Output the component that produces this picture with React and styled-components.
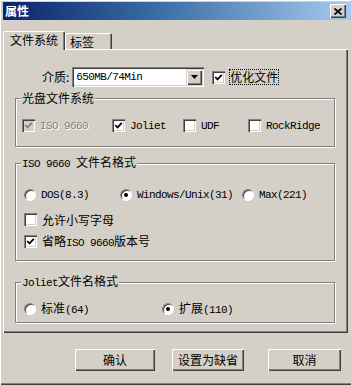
import React from "react";
import styled, { createGlobalStyle } from "styled-components";

const GlobalStyle = createGlobalStyle`
  html, body {
    margin: 0;
    padding: 0;
    background: #d4d0c8;
  }
  body {
    font-family: "Noto Sans CJK SC", "Liberation Sans", sans-serif;
    font-size: 12px;
    color: #000;
  }
`;

const Window = styled.div`
  width: 351px;
  height: 385px;
  box-sizing: border-box;
  overflow: hidden;
  padding: 2px 0 0 3px;
  background: #d4d0c8;
  box-shadow: inset 1px 1px 0 #ffffff, inset 0 -1px 0 #404040,
    inset 0 -2px 0 #808080;
`;

const TitleBar = styled.div`
  height: 18px;
  display: flex;
  align-items: center;
  justify-content: space-between;
  padding: 0 5px 0 2px;
  background: linear-gradient(90deg, #0a246a 0%, #3a6ea5 45%, #a6caf0 100%);
`;

const Title = styled.span`
  color: #fff;
  font-weight: 700;
  font-size: 12px;
  line-height: 12px;
`;

const CloseButton = styled.div`
  width: 16px;
  height: 14px;
  box-sizing: border-box;
  display: flex;
  align-items: center;
  justify-content: center;
  background: #d4d0c8;
  box-shadow: inset 1px 1px 0 #ffffff, inset -1px -1px 0 #404040,
    inset -2px -2px 0 #808080;
`;

const TabStrip = styled.div`
  margin-top: 11px;
  height: 18px;
  display: flex;
  align-items: flex-end;
`;

const Tab = styled.div`
  position: relative;
  z-index: ${(p) => (p.$active ? 1 : 0)};
  width: ${(p) => p.$w}px;
  height: ${(p) => (p.$active ? 19 : 16)}px;
  margin-bottom: ${(p) => (p.$active ? -1 : 0)}px;
  box-sizing: border-box;
  padding: ${(p) => (p.$active ? "2px 0 0 7px" : "2px 0 0 5px")};
  line-height: 14px;
  background: #d4d0c8;
  border-radius: 2px 2px 0 0;
  box-shadow: inset 1px 1px 0 #ffffff, inset -1px 0 0 #404040,
    inset -2px 0 0 #808080;
`;

const Panel = styled.div`
  width: 345px;
  height: 284px;
  box-sizing: border-box;
  padding: 18px 13px 0 12px;
  box-shadow: inset 1px 1px 0 #ffffff, inset -1px -1px 0 #404040,
    inset -2px -2px 0 #808080;
`;

const MediaRow = styled.div`
  height: 20px;
  display: flex;
  align-items: center;
  padding-left: 27px;
`;

const FieldLabel = styled.span`
  margin-right: 3px;
  line-height: 12px;
`;

const Combo = styled.div`
  width: 132px;
  height: 20px;
  box-sizing: border-box;
  display: flex;
  align-items: center;
  justify-content: space-between;
  padding: 2px 2px 2px 4px;
  background: #fff;
  box-shadow: inset 1px 1px 0 #808080, inset 2px 2px 0 #404040,
    inset -1px -1px 0 #ffffff, inset -2px -2px 0 #d4d0c8;
`;

const DropButton = styled.div`
  width: 16px;
  height: 16px;
  box-sizing: border-box;
  display: flex;
  align-items: center;
  justify-content: center;
  background: #d4d0c8;
  box-shadow: inset 1px 1px 0 #d4d0c8, inset 2px 2px 0 #ffffff,
    inset -1px -1px 0 #404040, inset -2px -2px 0 #808080;
`;

const Latin = styled.span`
  font-family: "Liberation Mono", "DejaVu Sans Mono", monospace;
  font-size: 11px;
  letter-spacing: -0.6px;
  color: ${(p) => (p.$muted ? "#808080" : "inherit")};
  text-shadow: ${(p) => (p.$muted ? "1px 1px 0 #ffffff" : "none")};
`;

const Box = styled.span`
  width: 13px;
  height: 13px;
  box-sizing: border-box;
  flex: none;
  display: flex;
  align-items: center;
  justify-content: center;
  background: ${(p) => (p.$disabled ? "#d4d0c8" : "#ffffff")};
  box-shadow: inset 1px 1px 0 #808080, inset 2px 2px 0 #404040,
    inset -1px -1px 0 #ffffff, inset -2px -2px 0 #d4d0c8;
`;

const RadioDot = styled.span`
  width: 12px;
  height: 12px;
  box-sizing: border-box;
  flex: none;
  border-radius: 50%;
  display: flex;
  align-items: center;
  justify-content: center;
  background: #fff;
  border: 1px solid;
  border-color: #808080 #ffffff #ffffff #808080;
  box-shadow: inset 1px 1px 0 #404040;
  &::after {
    content: "";
    width: 4px;
    height: 4px;
    border-radius: 50%;
    background: #000;
    display: ${(p) => (p.$on ? "block" : "none")};
  }
`;

const Option = styled.label`
  display: flex;
  align-items: center;
  gap: 5px;
  height: 13px;
  line-height: 12px;
  width: ${(p) => (p.$w ? `${p.$w}px` : "auto")};
  flex: none;
  white-space: nowrap;
`;

const FocusText = styled.span`
  margin-left: 4px;
  padding: 2px 1px;
  line-height: 12px;
  outline: 1px dotted #000;
  outline-offset: -1px;
`;

const Group = styled.fieldset`
  margin: ${(p) => p.$top}px 0 0;
  padding: ${(p) => p.$pad};
  border: 1px solid #808080;
  box-shadow: inset 1px 1px 0 #ffffff, 1px 1px 0 #ffffff;
  min-width: 0;
`;

const Legend = styled.legend`
  margin-left: 5px;
  padding: 0 1px;
  font-size: 12px;
  line-height: 12px;
  background: #d4d0c8;
`;

const Row = styled.div`
  display: flex;
  align-items: center;
  padding-left: ${(p) => p.$left}px;
  margin-top: ${(p) => p.$top || 0}px;
`;

const ButtonRow = styled.div`
  display: flex;
  margin-top: 16px;
  padding-left: 72px;
`;

const Button = styled.div`
  width: ${(p) => p.$w}px;
  height: 22px;
  margin-left: ${(p) => p.$ml || 0}px;
  box-sizing: border-box;
  display: flex;
  align-items: center;
  justify-content: center;
  line-height: 12px;
  background: #d4d0c8;
  box-shadow: inset 1px 1px 0 #ffffff, inset -1px -1px 0 #404040,
    inset -2px -2px 0 #808080;
`;

function Check({ disabled }) {
  return (
    <svg width="9" height="9" viewBox="0 0 9 9">
      <path
        d="M1.2 4 L3.5 6.4 L7.8 1.8"
        fill="none"
        stroke={disabled ? "#808080" : "#000"}
        strokeWidth="1.8"
      />
    </svg>
  );
}

function CheckBox({ checked, disabled, children, w }) {
  return (
    <Option $w={w}>
      <Box $disabled={disabled}>{checked && <Check disabled={disabled} />}</Box>
      {children}
    </Option>
  );
}

function Radio({ on, children, w }) {
  return (
    <Option $w={w}>
      <RadioDot $on={on} />
      {children}
    </Option>
  );
}

export default function App() {
  return (
    <>
      <GlobalStyle />
      <Window>
        <TitleBar>
          <Title>属性</Title>
          <CloseButton>
            <svg width="8" height="7" viewBox="0 0 8 7">
              <path d="M0.5 0.5 L7.5 6.5 M7.5 0.5 L0.5 6.5" stroke="#000" strokeWidth="1.7" />
            </svg>
          </CloseButton>
        </TitleBar>

        <TabStrip>
          <Tab $active $w={62}>文件系统</Tab>
          <Tab $w={47}>标签</Tab>
        </TabStrip>

        <Panel>
          <MediaRow>
            <FieldLabel>介质:</FieldLabel>
            <Combo>
              <Latin>650MB/74Min</Latin>
              <DropButton>
                <svg width="7" height="4" viewBox="0 0 7 4">
                  <path d="M0 0 H7 L3.5 4 Z" fill="#000" />
                </svg>
              </DropButton>
            </Combo>
            <Row $left={8}>
              <Box>
                <Check />
              </Box>
              <FocusText>优化文件</FocusText>
            </Row>
          </MediaRow>

          <Group $top={5} $pad="15px 0 14px">
            <Legend>光盘文件系统</Legend>
            <Row $left={6}>
              <CheckBox checked disabled w={90}>
                <Latin $muted>ISO 9660</Latin>
              </CheckBox>
              <CheckBox checked w={71}>
                <Latin>Joliet</Latin>
              </CheckBox>
              <CheckBox w={65}>
                <Latin>UDF</Latin>
              </CheckBox>
              <CheckBox>
                <Latin>RockRidge</Latin>
              </CheckBox>
            </Row>
          </Group>

          <Group $top={9} $pad="18px 0 12px">
            <Legend>
              <Latin>ISO 9660 </Latin>文件名格式
            </Legend>
            <Row $left={8}>
              <Radio w={96}>
                <Latin>DOS(8.3)</Latin>
              </Radio>
              <Radio on w={122}>
                <Latin>Windows/Unix(31)</Latin>
              </Radio>
              <Radio>
                <Latin>Max(221)</Latin>
              </Radio>
            </Row>
            <Row $left={8} $top={12}>
              <CheckBox>允许小写字母</CheckBox>
            </Row>
            <Row $left={8} $top={9}>
              <CheckBox checked>
                <span>
                  省略<Latin>ISO 9660</Latin>版本号
                </span>
              </CheckBox>
            </Row>
          </Group>

          <Group $top={14} $pad="13px 0 7px">
            <Legend>
              <Latin>Joliet</Latin>文件名格式
            </Legend>
            <Row $left={8}>
              <Radio w={138}>
                <span>
                  标准<Latin>(64)</Latin>
                </span>
              </Radio>
              <Radio on>
                <span>
                  扩展<Latin>(110)</Latin>
                </span>
              </Radio>
            </Row>
          </Group>
        </Panel>

        <ButtonRow>
          <Button $w={80}>确认</Button>
          <Button $w={72} $ml={17}>设置为缺省</Button>
          <Button $w={73} $ml={24}>取消</Button>
        </ButtonRow>
      </Window>
    </>
  );
}
